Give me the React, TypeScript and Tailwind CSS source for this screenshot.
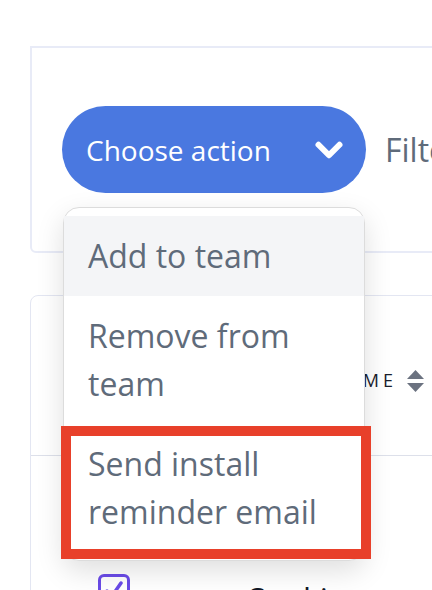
import { ChevronDown } from 'lucide-react';

const actions = ['Add to team', 'Remove from team', 'Send install reminder email'];

export default function App() {
  return (
    <div className="relative w-[432px] h-[590px] overflow-hidden bg-white font-['Open_Sans',sans-serif]">
      <div className="pl-[30px] pt-[46px] w-[560px]">
        {/* toolbar card */}
        <div className="h-[207px] border-2 border-[#e8ebf7] rounded-bl-md flex items-start pt-[58px] pl-[30px] gap-[19px]">
          <button className="w-[304px] h-[87px] rounded-full bg-[#4a78e0] flex items-center justify-between pl-6 pr-[16px] text-white text-[28px]">
            <span>Choose action</span>
            <ChevronDown size={42} strokeWidth={3.4} className="text-white" />
          </button>
          <span className="h-[87px] flex items-center text-[32px] text-[#5f6b7a]">Filter</span>
        </div>

        {/* table card */}
        <div className="mt-[42px] border border-[#e3e6f2] rounded-lg">
          <div className="h-[160px] border-b border-[#dde0ea] flex items-center pl-[299px] pt-[10px]">
            <span className="text-[18px] tracking-[0.22em] text-[#1a202c] uppercase">Name</span>
            <svg width="17" height="22" viewBox="0 0 17 22" className="ml-[10px]">
              <path d="M8.5 0 L17 9 H0 Z" fill="#6b7280" />
              <path d="M8.5 22 L17 13 H0 Z" fill="#6b7280" />
            </svg>
          </div>
          <div className="flex items-start pt-[118px] pl-[67px] h-[200px]">
            <div className="w-8 h-8 rounded-md border-[3px] border-[#6a4be8] flex items-center justify-center">
              <svg width="20" height="20" viewBox="0 0 20 20">
                <path d="M3 11 L8 16 L17 3" fill="none" stroke="#6a4be8" strokeWidth="3.5" strokeLinecap="round" strokeLinejoin="round" />
              </svg>
            </div>
            <span className="ml-[118px] mt-[2px] text-[32px] text-[#111827]">Sankit</span>
          </div>
        </div>
      </div>

      {/* dropdown menu */}
      <div className="absolute left-[63px] top-[207px] w-[302px] bg-white border border-[#dcdcdc] rounded-2xl py-2 shadow-[0_10px_28px_rgba(0,0,0,0.13)]">
        {actions.map((a, i) => (
          <div
            key={a}
            className={`px-6 py-4 text-[32px] leading-[48px] text-[#5f6b7a] ${i === 0 ? 'bg-[#f4f5f7]' : ''}`}
          >
            {a}
          </div>
        ))}
      </div>

      {/* annotation */}
      <div className="absolute left-[61px] top-[426px] w-[310px] h-[133px] border-[10px] border-[#e8402a]" />
    </div>
  );
}
